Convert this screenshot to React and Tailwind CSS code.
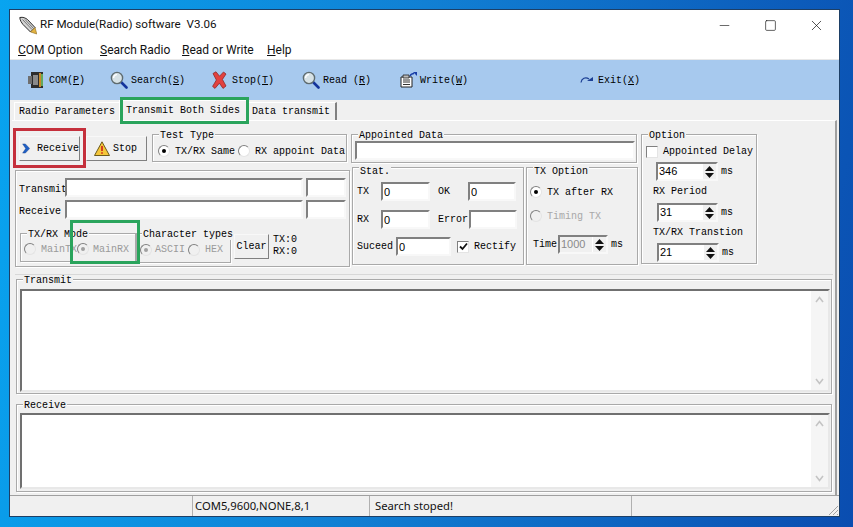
import { Minus, Square, X } from 'lucide-react'

const MENU = [
  ['C', 'OM Option', 'w-[82px]'],
  ['S', 'earch Radio', 'w-[82px]'],
  ['R', 'ead or Write', 'w-[85px]'],
  ['H', 'elp', ''],
]

function Group({ title, className = '', legendClass = '-top-[5px]', children }) {
  return (
    <div className={`relative border border-[#a9a9a9] shadow-[inset_1px_1px_0_#fff,1px_1px_0_#fff] ${className}`}>
      <span className={`absolute left-[6px] bg-[#f0f0f0] px-px leading-[11px] whitespace-nowrap text-black ${legendClass}`}>{title}</span>
      {children}
    </div>
  )
}

function Radio({ checked, disabled }) {
  return (
    <span className={`flex shrink-0 items-center justify-center w-[12px] h-[12px] rounded-full border border-t-[#808080] border-l-[#808080] border-r-[#e4e4e4] border-b-[#e4e4e4] ${disabled ? 'bg-[#f0f0f0]' : 'bg-white'}`}>
      {checked && <span className={`w-[4px] h-[4px] rounded-full ${disabled ? 'bg-[#a0a0a0]' : 'bg-black'}`} />}
    </span>
  )
}

function Field({ value = '', className = '', disabled }) {
  return (
    <input
      readOnly
      value={value}
      className={`block h-[19px] px-px border-2 border-t-[#808080] border-l-[#808080] border-r-[#f8f8f8] border-b-[#f8f8f8] font-['Liberation_Sans'] text-[11px] outline-none ${disabled ? 'bg-[#f0f0f0] text-[#8a8a8a]' : 'bg-white text-black'} ${className}`}
    />
  )
}

function Spin({ value, className = '', disabled }) {
  return (
    <div className={`flex h-[19px] border-2 border-t-[#808080] border-l-[#808080] border-r-[#f8f8f8] border-b-[#f8f8f8] font-['Liberation_Sans'] text-[11px] ${disabled ? 'bg-[#f0f0f0] text-[#8a8a8a]' : 'bg-white text-black'} ${className}`}>
      <span className="flex-1 px-px leading-[14px]">{value}</span>
      <span className="flex flex-col w-[14px] bg-[#f0f0f0] items-center justify-center gap-[2px] border-l border-white">
        <svg width="9" height="5" viewBox="0 0 9 5"><path d="M4.5 0 9 5H0z" fill="#111" /></svg>
        <svg width="9" height="5" viewBox="0 0 9 5"><path d="M0 0h9L4.5 5z" fill="#111" /></svg>
      </span>
    </div>
  )
}

function Scrollbar() {
  return (
    <div className="flex flex-col justify-between items-center w-[17px] bg-[#f5f5f5] py-[5px]">
      <svg width="9" height="7" viewBox="0 0 9 7"><path d="M1 6 4.5 1.5 8 6" fill="none" stroke="#c4c4c4" strokeWidth="1.6" /></svg>
      <svg width="9" height="7" viewBox="0 0 9 7"><path d="M1 1 4.5 5.5 8 1" fill="none" stroke="#c4c4c4" strokeWidth="1.6" /></svg>
    </div>
  )
}

function TextArea({ className = '' }) {
  return (
    <div className={`flex border-2 border-t-[#707070] border-l-[#707070] border-r-[#e8e8e8] border-b-[#e8e8e8] bg-white ${className}`}>
      <div className="flex-1" />
      <Scrollbar />
    </div>
  )
}

function Lens() {
  return (
    <svg width="18" height="18" viewBox="0 0 18 18">
      <path d="M10.5 10.5 16.5 16.5" stroke="#14349c" strokeWidth="2.6" strokeLinecap="round" />
      <circle cx="7" cy="7" r="5.6" fill="#d7e2e6" stroke="#5f6c70" strokeWidth="1.4" />
      <path d="M3.6 7a3.4 3.4 0 0 1 3.4-3.4" fill="none" stroke="#fff" strokeWidth="1.4" />
    </svg>
  )
}

function ComIcon() {
  return (
    <svg width="18" height="18" viewBox="0 0 18 18">
      <rect x="3" y="1" width="12" height="16" fill="#2d2d2d" />
      <rect x="0" y="5" width="4" height="8" fill="#6f6f6f" />
      <rect x="5" y="4" width="5" height="10" fill="#8a8a8a" />
      <rect x="11" y="2" width="2" height="14" fill="#c98a2b" />
      <rect x="13" y="3" width="2" height="12" fill="#63a85c" />
    </svg>
  )
}

function StopIcon() {
  return (
    <svg className="mr-[2px]" width="15" height="18" viewBox="0 0 15 18">
      <path d="M1 2.500 4 .8l3.500 4.400L11.500 1 14 3l-3.600 5.400L14 15l-3 2.400-3.600-5.200L3 17.400.6 15.400 4.400 9z" fill="#e2413f" stroke="#8e2a2a" strokeWidth=".8" />
    </svg>
  )
}

function WriteIcon() {
  return (
    <svg width="17" height="16" viewBox="0 0 17 16">
      <path d="M1 5h11v10H1z" fill="#fff" stroke="#222" />
      <path d="M3 3h6v3H3z" fill="#bbb" stroke="#222" strokeWidth=".8" />
      <path d="M3 8h7M3 10h7M3 12.500h7" stroke="#333" />
      <path d="M10 4c1-2 2-2.500 4-2.500" fill="none" stroke="#1a3fa8" strokeWidth="1.4" />
      <path d="M13 0h4v4z" fill="#1a3fa8" />
    </svg>
  )
}

function ExitIcon() {
  return (
    <svg className="mr-[2px]" width="13" height="8" viewBox="0 0 13 8">
      <path d="M1 6.500C1.500 2.500 5.500 .5 9 3" fill="none" stroke="#1c3f94" strokeWidth="1.2" />
      <path d="M7 5h6V1z" fill="#1c3f94" />
    </svg>
  )
}

function AppIcon() {
  return (
    <svg width="18" height="19" viewBox="0 0 18 19">
      <path d="M.8 1.500C4 .8 6.500 2 8.500 3.500L16 11.500 11.500 16 4 8.500C2.500 6.500 1 4.500.8 1.500z" fill="#d4d4d4" stroke="#2c2c2c" />
      <path d="M3.500 3.500 13 13.500M6 3.500 14.500 12.500" stroke="#777" />
      <path d="M11.500 16 16 11.500l1.800 6.500z" fill="#e3b341" stroke="#8b6a1c" strokeWidth=".6" />
    </svg>
  )
}

function ToolItem({ icon, label, hot, className = '' }) {
  return (
    <div className={`flex items-center ${className}`}>
      {icon}
      <span className="ml-[3px] text-[10px] whitespace-pre">
        {label}(<u>{hot}</u>)
      </span>
    </div>
  )
}

export default function App() {
  return (
    <div className="w-[853px] h-[527px] overflow-hidden pt-[10px] pl-[10px] bg-[linear-gradient(100deg,#08a4f0_0%,#1180d4_45%,#0a4db0_100%)] font-['Liberation_Mono',monospace] text-[10px] text-black">
      <div className="relative flex flex-col w-[829px] h-[506px] bg-[#f0f0f0] shadow-[0_0_0_1px_#1d3f66]">
        {/* Title */}
        <div className="flex items-center h-[30px] bg-white pl-[9px] font-['Roboto',sans-serif] text-[11.6px] text-[#111]">
          <AppIcon />
          <span className="ml-[3px] whitespace-pre">RF Module(Radio) software  V3.06</span>
          <div className="flex ml-auto h-full items-center text-[#111]">
            <div className="flex justify-center w-[46px]"><Minus size={15} strokeWidth={1} /></div>
            <div className="flex justify-center w-[46px]"><Square size={13} strokeWidth={1.2} /></div>
            <div className="flex justify-center w-[46px]"><X size={17} strokeWidth={1} /></div>
          </div>
        </div>

        {/* Menu */}
        <div className="flex items-center h-[20px] bg-white pl-[8px] border-b border-[#e8e8e8] font-['Roboto',sans-serif] text-[12px] text-[#111]">
          {MENU.map(([hot, rest, width]) => (
            <span key={rest} className={width}><u>{hot}</u>{rest}</span>
          ))}
        </div>

        {/* Toolbar */}
        <div className="flex items-center h-[40px] bg-[#a7c9ee] pl-[18px]">
          <ToolItem icon={<ComIcon />} label="COM" hot="P" className="w-[82px]" />
          <ToolItem icon={<Lens />} label="Search" hot="S" className="w-[102px]" />
          <ToolItem icon={<StopIcon />} label="Stop" hot="T" className="w-[90px]" />
          <ToolItem icon={<Lens />} label="Read " hot="R" className="w-[98px]" />
          <ToolItem icon={<WriteIcon />} label="Write" hot="W" className="w-[180px]" />
          <ToolItem icon={<ExitIcon />} label="Exit" hot="X" />
        </div>

        {/* Tabs */}
        <div className="flex items-end h-[20px] pl-[4px]">
          <span className="flex items-center h-[18px] px-[4px] border-t border-l border-white">Radio Parameters</span>
          <span className="flex items-center h-[20px] px-[6px] bg-[#f0f0f0] border-t border-l border-white">Transmit Both Sides</span>
          <span className="flex items-center h-[18px] pl-[6px] pr-[5px] border-t border-white border-r-2 border-r-[#808080]">Data transmit</span>
        </div>

        {/* Panel */}
        <div className="flex flex-col flex-1 mx-[2px] pl-[3px] border-t border-white border-r-2 border-r-[#a0a0a0]">
          <div className="flex mt-[13px]">
            <div className="w-[336px]">
              <div className="flex items-start h-[29px]">
                <button className="flex items-center ml-[4px] mt-[2px] w-[61px] h-[25px] pl-[2px] bg-[#f0f0f0] border border-[#f8f8f8] border-r-[#808080] border-b-[#808080]">
                  <svg width="13" height="15" viewBox="0 0 13 15"><path d="M1 0h4.500L12.500 7.500 5.500 15H1l5-7.500z" fill="#1f5fc4" stroke="#123a80" strokeWidth=".6" /></svg>
                  <span className="ml-[7px]">Receive</span>
                </button>
                <button className="flex items-center ml-[6px] mt-[2px] w-[61px] h-[25px] pl-[7px] bg-[#f0f0f0] border border-[#f8f8f8] border-r-[#808080] border-b-[#808080]">
                  <svg width="16" height="15" viewBox="0 0 16 15">
                    <path d="M8 .8 15.500 14.500H.5z" fill="#f4c63a" stroke="#6b5a1c" />
                    <path d="M8 5v5M8 11.300v1.500" stroke="#d1301f" strokeWidth="1.8" />
                  </svg>
                  <span className="ml-[3px]">Stop</span>
                </button>
                <Group title="Test Type" className="ml-[5px] w-[195px] h-[28px]">
                  <div className="flex items-center h-full pl-[5px] pt-[6px] whitespace-pre">
                    <Radio checked />
                    <span className="ml-[5px]">TX/RX Same</span>
                    <span className="ml-[3px]"><Radio /></span>
                    <span className="ml-[5px]">RX appoint Data</span>
                  </div>
                </Group>
              </div>

              <div className="mt-[7px] w-[335px] h-[97px] border border-[#a9a9a9] shadow-[inset_1px_1px_0_#fff,1px_1px_0_#fff] pl-[2px]">
                <div className="flex items-center mt-[7px] h-[19px] pl-px">
                  <span className="w-[46px] pt-[3px]">Transmit</span>
                  <Field className="w-[238px]" />
                  <Field className="ml-[3px] w-[40px]" />
                </div>
                <div className="flex items-center mt-[3px] h-[19px] pl-px">
                  <span className="w-[46px] pt-[3px]">Receive</span>
                  <Field className="w-[238px]" />
                  <Field className="ml-[3px] w-[40px]" />
                </div>
                <div className="flex items-start mt-[14px] ml-[2px]">
                  <Group title="TX/RX Mode" className="w-[116px] h-[29px]">
                    <div className="flex items-center h-full pl-[3px] pt-[3px] text-[#9a9a9a]">
                      <Radio disabled />
                      <span className="ml-[5px] w-[36px] overflow-hidden">MainTX</span>
                      <Radio checked disabled />
                      <span className="ml-[4px]">MainRX</span>
                    </div>
                  </Group>
                  <Group title="Character types" legendClass="-top-[5px] -ml-px" className="w-[95px] h-[30px]">
                    <div className="flex items-center h-full pl-[3px] pt-[3px] text-[#9a9a9a]">
                      <Radio checked disabled />
                      <span className="ml-[3px]">ASCII</span>
                      <span className="ml-[3px]"><Radio disabled /></span>
                      <span className="ml-[5px]">HEX</span>
                    </div>
                  </Group>
                  <button className="ml-[3px] mt-[1px] w-[35px] h-[25px] bg-[#f0f0f0] border border-[#f8f8f8] border-r-[#808080] border-b-[#808080]">Clear</button>
                  <div className="ml-[4px] mt-px leading-[12px]">
                    <div>TX:0</div>
                    <div>RX:0</div>
                  </div>
                </div>
              </div>
            </div>

            <div className="w-[287px]">
              <Group title="Appointed Data" className="w-[286px] h-[29px]">
                <div className="pl-[3px] pt-[6px]">
                  <Field className="w-[280px]" />
                </div>
              </Group>
              <div className="flex mt-[4px] ml-px">
                <Group title="Stat." legendClass="-top-[2px]" className="w-[172px] h-[98px]">
                  <div className="pl-[4px] pt-[14px]">
                    <div className="flex items-center h-[19px]">
                      <span className="w-[24px]">TX</span>
                      <Field value="0" className="w-[49px]" />
                      <span className="ml-[8px] w-[30px]">OK</span>
                      <Field value="0" className="w-[48px]" />
                    </div>
                    <div className="flex items-center h-[19px] mt-[9px]">
                      <span className="w-[24px]">RX</span>
                      <Field value="0" className="w-[49px]" />
                      <span className="ml-[8px] w-[31px]">Error</span>
                      <Field className="w-[48px]" />
                    </div>
                    <div className="flex items-center h-[19px] mt-[8px]">
                      <span className="w-[39px]">Suceed</span>
                      <Field value="0" className="w-[55px]" />
                      <span className="flex items-center justify-center ml-[6px] w-[12px] h-[12px] bg-white border border-t-[#808080] border-l-[#808080] border-r-[#e4e4e4] border-b-[#e4e4e4]">
                        <svg width="9" height="9" viewBox="0 0 9 9"><path d="M1 4.500 3.500 7 8 1.500" fill="none" stroke="#111" strokeWidth="1.800" /></svg>
                      </span>
                      <span className="ml-[5px]">Rectify</span>
                    </div>
                  </div>
                </Group>
                <Group title="TX Option" legendClass="-top-[2px]" className="ml-[2px] w-[112px] h-[98px]">
                  <div className="pl-[3px] pt-[17px]">
                    <div className="flex items-center h-[14px]">
                      <Radio checked />
                      <span className="ml-[5px]">TX after RX</span>
                    </div>
                    <div className="flex items-center h-[14px] mt-[10px] text-[#a8a8a8]">
                      <Radio disabled />
                      <span className="ml-[5px]">Timing TX</span>
                    </div>
                    <div className="flex items-center h-[19px] mt-[12px] ml-[3px]">
                      <span className="w-[25px]">Time</span>
                      <Spin value="1000" disabled className="w-[50px]" />
                      <span className="ml-[3px]">ms</span>
                    </div>
                  </div>
                </Group>
              </div>
            </div>

            <Group title="Option" className="ml-[3px] w-[116px] h-[130px]">
              <div className="pl-[4px] pt-[10px]">
                <div className="flex items-center h-[13px]">
                  <span className="w-[12px] h-[12px] bg-white border border-t-[#808080] border-l-[#808080] border-r-[#e4e4e4] border-b-[#e4e4e4]" />
                  <span className="ml-[5px] whitespace-nowrap">Appointed Delay</span>
                </div>
                <div className="flex items-center mt-[4px] ml-[10px]">
                  <Spin value="346" className="w-[62px]" />
                  <span className="ml-[3px]">ms</span>
                </div>
                <div className="mt-[5px] ml-[7px] leading-[12px]">RX Period</div>
                <div className="flex items-center mt-[5px] ml-[11px]">
                  <Spin value="31" className="w-[61px]" />
                  <span className="ml-[3px]">ms</span>
                </div>
                <div className="mt-[5px] ml-[7px] leading-[12px]">TX/RX Transtion</div>
                <div className="flex items-center mt-[4px] ml-[11px]">
                  <Spin value="21" className="w-[62px]" />
                  <span className="ml-[3px]">ms</span>
                </div>
              </div>
            </Group>
          </div>

          <div className="mt-[7px] mr-[2px] border-t border-[#d8d8d8]" />
          <Group title="Transmit" className="mt-[4px] ml-px w-[816px] h-[115px]">
            <TextArea className="mt-[9px] ml-[3px] w-[810px] h-[103px]" />
          </Group>
          <Group title="Receive" className="mt-[10px] ml-px w-[816px] h-[88px]">
            <TextArea className="mt-[8px] ml-[3px] w-[810px] h-[76px]" />
          </Group>
        </div>

        {/* Status bar */}
        <div className="flex h-[21px] mt-auto border-t border-[#a0a0a0] font-['Noto_Sans',sans-serif] text-[11.25px] text-[#111] leading-[20px]">
          <div className="w-[183px] border-r border-[#b0b0b0]" />
          <div className="w-[177px] pl-[2px] border-r border-[#b0b0b0]">COM5,9600,NONE,8,1</div>
          <div className="w-[262px] pl-[5px] border-r border-[#b0b0b0]">Search stoped!</div>
          <div className="flex-1 flex justify-end items-end">
            <svg width="12" height="12" viewBox="0 0 12 12"><path d="M11 2 2 11M11 6 6 11M11 10 10 11" stroke="#a0a0a0" /></svg>
          </div>
        </div>

        {/* Annotation boxes */}
        <div className="absolute left-[3px] top-[118px] w-[73px] h-[40px] border-[3px] border-[#c5303c]" />
        <div className="absolute left-[110px] top-[87px] w-[129px] h-[27px] border-[3px] border-[#2aa45c]" />
        <div className="absolute left-[60px] top-[210px] w-[70px] h-[44px] border-[3px] border-[#2aa45c]" />
      </div>
    </div>
  )
}
